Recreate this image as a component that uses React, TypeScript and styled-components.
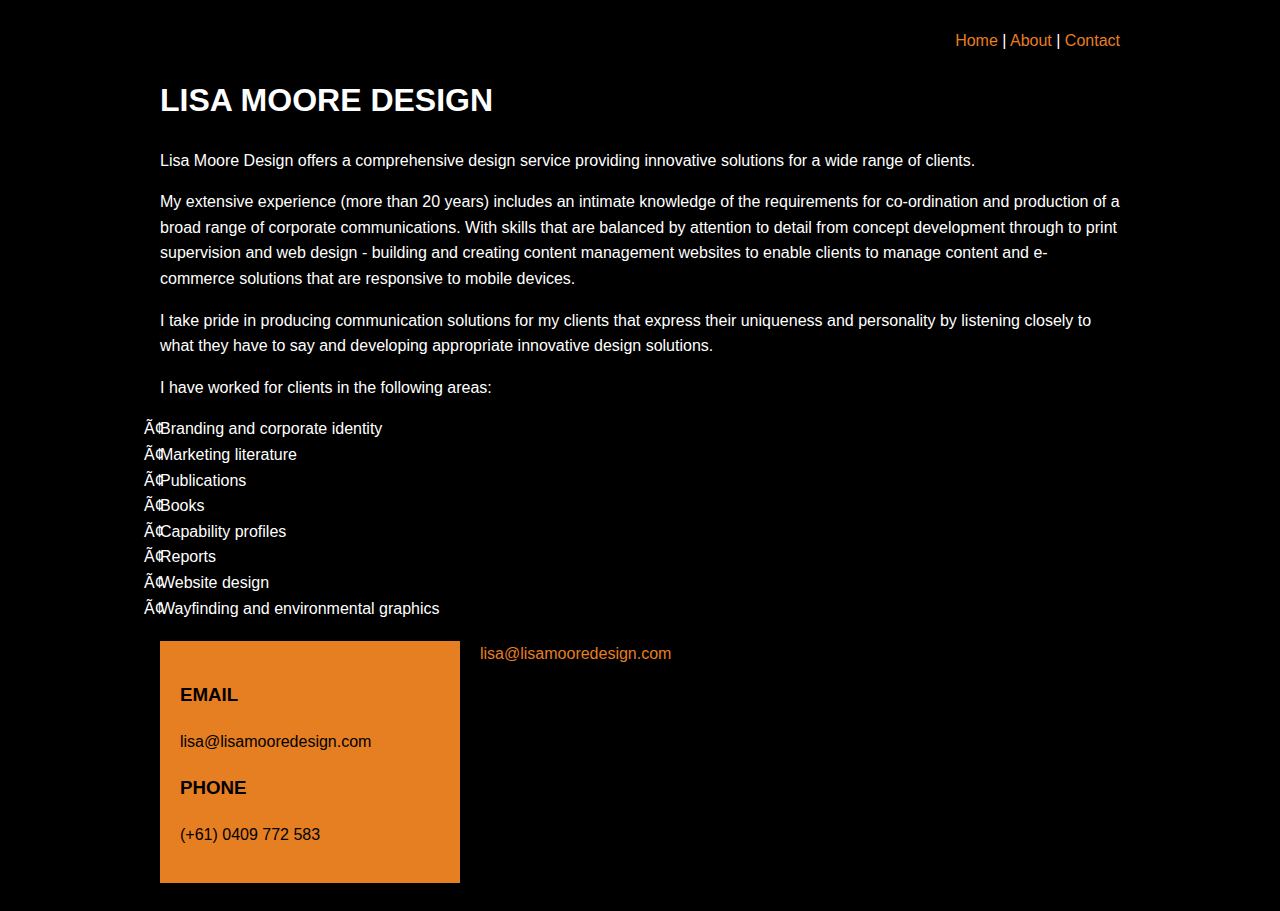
import React from "react";
import styled, { createGlobalStyle } from "styled-components";

const GlobalStyle = createGlobalStyle`
  html, body {
    margin: 0;
    padding: 0;
    background: #000;
  }
  body {
    font-family: "Liberation Sans", Arial, sans-serif;
    font-size: 16px;
    line-height: 1.6;
    color: #fff;
  }
`;

const orange = "#e67e22";

const Page = styled.div`
  width: 960px;
  margin: 0 auto;
  padding: 28px 0 27px;
`;

const Nav = styled.nav`
  text-align: right;
  color: #fff;
`;

const NavLink = styled.a`
  color: ${orange};
  text-decoration: none;
`;

const Title = styled.h1`
  font-size: 32px;
  font-weight: bold;
  margin: 21.44px 0;
  line-height: 1.6;
`;

const Para = styled.p`
  margin: 16px 0;
`;

const List = styled.ul`
  list-style: none;
  margin: 16px 0 20px -16px;
  padding: 0;
`;

const Item = styled.li`
  white-space: nowrap;
`;

const Garble = styled.span`
  display: inline-block;
  width: 16px;
  overflow: visible;
  white-space: nowrap;
`;

const ContactRow = styled.div`
  display: flex;
  align-items: flex-start;
  gap: 20px;
`;

const Box = styled.div`
  width: 300px;
  box-sizing: border-box;
  padding: 20px;
  background: ${orange};
  color: #000;
  display: flow-root;
`;

const BoxHeading = styled.h3`
  font-size: 18.72px;
  font-weight: bold;
  margin: 19px 0 18.5px;
  line-height: 1.6;
`;

const BoxText = styled.p`
  margin: 16px 0;
`;

const SideLink = styled.a`
  color: ${orange};
  text-decoration: none;
  line-height: 1.6;
`;

const items = [
  "Branding and corporate identity",
  "Marketing literature",
  "Publications",
  "Books",
  "Capability profiles",
  "Reports",
  "Website design",
  "Wayfinding and environmental graphics",
];

export default function App() {
  return (
    <>
      <GlobalStyle />
      <Page>
        <Nav>
          <NavLink href="#">Home</NavLink> | <NavLink href="#">About</NavLink> |{" "}
          <NavLink href="#">Contact</NavLink>
        </Nav>
        <Title>LISA MOORE DESIGN</Title>
        <Para>
          Lisa Moore Design offers a comprehensive design service providing innovative solutions for a wide range of clients.
        </Para>
        <Para>
          My extensive experience (more than 20 years) includes an intimate knowledge of the requirements for co-ordination and production of a broad range of corporate communications. With skills that are balanced by attention to detail from concept development through to print supervision and web design - building and creating content management websites to enable clients to manage content and e-commerce solutions that are responsive to mobile devices.
        </Para>
        <Para>
          I take pride in producing communication solutions for my clients that express their uniqueness and personality by listening closely to what they have to say and developing appropriate innovative design solutions.
        </Para>
        <Para>I have worked for clients in the following areas:</Para>
        <List>
          {items.map((it) => (
            <Item key={it}>
              <Garble>Ã¢</Garble>
              {it}
            </Item>
          ))}
        </List>
        <ContactRow>
          <Box>
            <BoxHeading>EMAIL</BoxHeading>
            <BoxText>lisa@lisamooredesign.com</BoxText>
            <BoxHeading>PHONE</BoxHeading>
            <BoxText>(+61) 0409 772 583</BoxText>
          </Box>
          <SideLink href="#">lisa@lisamooredesign.com</SideLink>
        </ContactRow>
      </Page>
    </>
  );
}
